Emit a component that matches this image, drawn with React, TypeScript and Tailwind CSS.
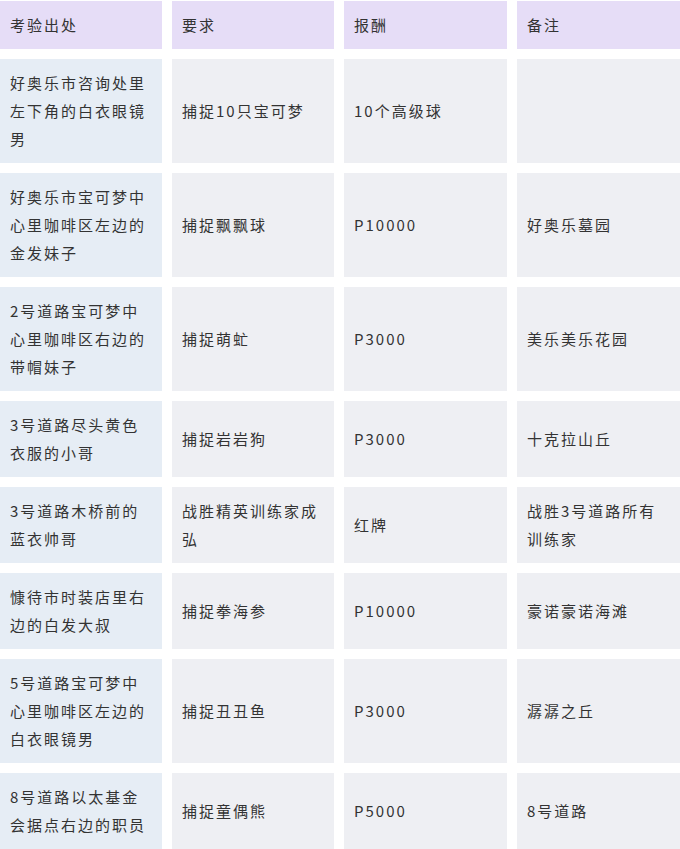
import React from "react";

const head = ["考验出处", "要求", "报酬", "备注"];

const rows: string[][] = [
  ["好奥乐市咨询处里左下角的白衣眼镜男", "捕捉10只宝可梦", "10个高级球", ""],
  ["好奥乐市宝可梦中心里咖啡区左边的金发妹子", "捕捉飘飘球", "P10000", "好奥乐墓园"],
  ["2号道路宝可梦中心里咖啡区右边的带帽妹子", "捕捉萌虻", "P3000", "美乐美乐花园"],
  ["3号道路尽头黄色衣服的小哥", "捕捉岩岩狗", "P3000", "十克拉山丘"],
  ["3号道路木桥前的蓝衣帅哥", "战胜精英训练家成弘", "红牌", "战胜3号道路所有训练家"],
  ["慷待市时装店里右边的白发大叔", "捕捉拳海参", "P10000", "豪诺豪诺海滩"],
  ["5号道路宝可梦中心里咖啡区左边的白衣眼镜男", "捕捉丑丑鱼", "P3000", "潺潺之丘"],
  ["8号道路以太基金会据点右边的职员", "捕捉童偶熊", "P5000", "8号道路"],
];

export default function App() {
  return (
    <div className="bg-white pt-px font-['Noto_Sans_CJK_SC',sans-serif] text-[15px] leading-[28px] tracking-[2px] text-[#333]">
      <div className="grid grid-cols-[162px_162px_163px_163px] gap-[10px]">
        {head.map((h) => (
          <div key={h} className="bg-[#e6ddf7] px-[10px] py-[10px]">
            {h}
          </div>
        ))}
        {rows.map((r, i) =>
          r.map((c, j) => (
            <div
              key={`${i}-${j}`}
              className={`flex items-center px-[10px] py-[10px] ${j === 0 ? "bg-[#e6edf5]" : "bg-[#eeeff3]"}`}
            >
              <span>{c}</span>
            </div>
          ))
        )}
      </div>
    </div>
  );
}
